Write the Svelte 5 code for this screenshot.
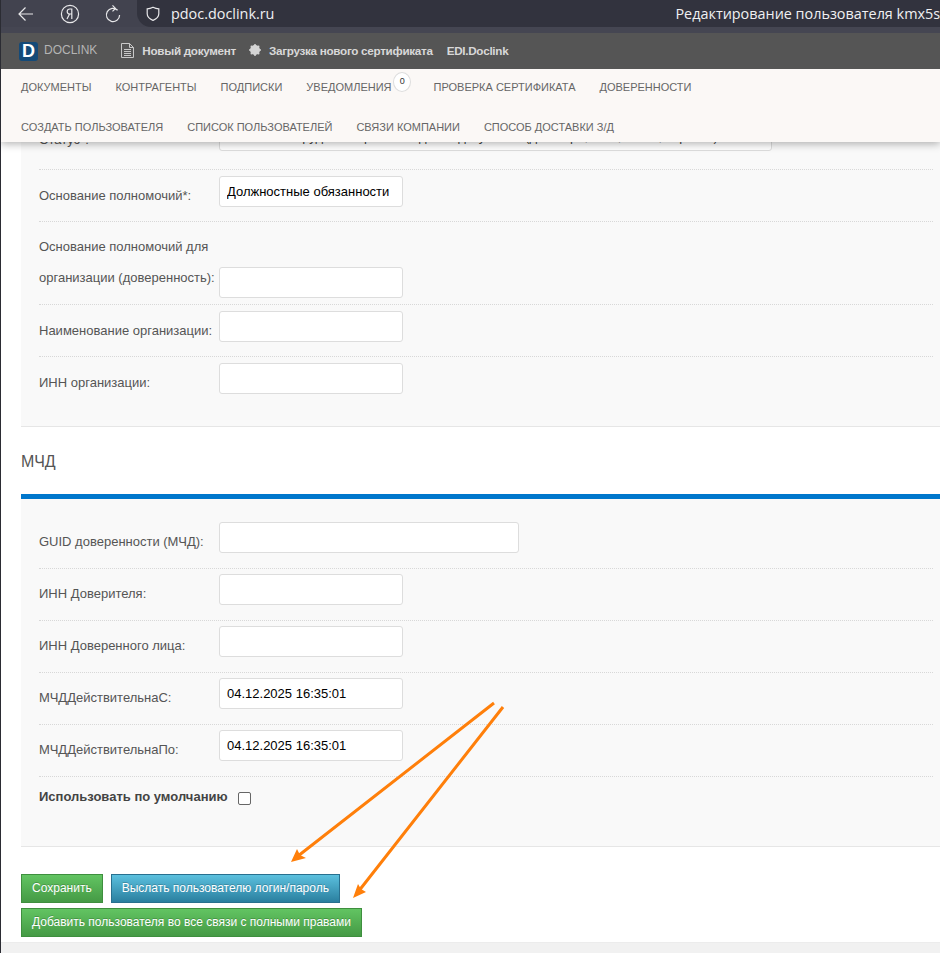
<script>
  const nav1 = ['ДОКУМЕНТЫ', 'КОНТРАГЕНТЫ', 'ПОДПИСКИ'];
  const nav1b = ['ПРОВЕРКА СЕРТИФИКАТА', 'ДОВЕРЕННОСТИ'];
  const nav2 = ['СОЗДАТЬ ПОЛЬЗОВАТЕЛЯ', 'СПИСОК ПОЛЬЗОВАТЕЛЕЙ', 'СВЯЗИ КОМПАНИИ', 'СПОСОБ ДОСТАВКИ З/Д'];
</script>

<div class="page">
  <header class="top">
    <div class="browser">
      <div class="tools">
        <svg class="ic back" width="18" height="16" viewBox="0 0 18 16" fill="none" stroke="#e8e8ea" stroke-width="1.2"><path d="M16 8H2M8.500 1.500 2 8l6.500 6.500"/></svg>
        <svg class="ic ya" width="20" height="20" viewBox="0 0 20 20" fill="none" stroke="#e8e8ea" stroke-width="1.2"><circle cx="10" cy="10" r="8.600"/><path d="M11.800 15V5H9.900C8.200 5 7.200 6 7.200 7.500S8.200 10 9.900 10h1.900M9.600 10 7 15"/></svg>
        <svg class="ic reload" width="18" height="20" viewBox="0 0 18 20" fill="none" stroke="#e8e8ea" stroke-width="1.2"><path d="M13.600 6.200A6.600 6.600 0 1 0 15.600 11M8.500 1.400l3 3-3 3"/></svg>
      </div>
      <div class="omni">
        <svg class="ic" width="14" height="16" viewBox="0 0 14 16" fill="none" stroke="#e8e8ea" stroke-width="1.2"><path d="M7 1.200c2 1 3.800 1.500 5.800 1.600v5c0 3-2.500 5.200-5.800 6.600C3.700 13 1.200 10.800 1.200 7.800v-5C3.200 2.700 5 2.200 7 1.200Z"/></svg>
        <span class="url">pdoc.doclink.ru</span>
        <span class="title">Редактирование пользователя kmx5si</span>
      </div>
    </div>
    <div class="band"></div>
    <div class="brandbar">
      <span class="logo">D</span>
      <span class="brand">DOCLINK</span>
      <span class="bitem doc">
        <svg width="13" height="15" viewBox="0 0 13 15" fill="none" stroke="#c8c8c8" stroke-width="1"><path d="M.5.5h8l4 4v10H.5ZM8.500.5v4h4M3 6.500h7M3 8.500h7M3 10.500h7M3 12.500h7"/></svg>
        Новый документ
      </span>
      <span class="bitem cert">
        <svg width="12" height="12" viewBox="0 0 12 12" fill="#d4d4d4"><circle cx="6" cy="6" r="5"/><circle cx="6" cy="1" r="1"/><circle cx="6" cy="11" r="1"/><circle cx="1" cy="6" r="1"/><circle cx="11" cy="6" r="1"/><circle cx="2.500" cy="2.500" r="1"/><circle cx="9.500" cy="2.500" r="1"/><circle cx="2.500" cy="9.500" r="1"/><circle cx="9.500" cy="9.500" r="1"/></svg>
        Загрузка нового сертификата
      </span>
      <span class="bitem edi">EDI.Doclink</span>
    </div>
    <nav class="menu">
      <div class="mrow">
        {#each nav1 as n}<span>{n}</span>{/each}
        <span class="notif">УВЕДОМЛЕНИЯ<b class="badge">0</b></span>
        {#each nav1b as n}<span>{n}</span>{/each}
      </div>
      <div class="mrow">
        {#each nav2 as n}<span>{n}</span>{/each}
      </div>
    </nav>
  </header>

  <main class="content">
    <section class="panel first">
      <div class="row status">
        <label>Статус*:</label>
        <div class="field wide">Сотрудник с правом подписи документа (договора, акта, счёта, справки)</div>
      </div>
      <div class="row">
        <label>Основание полномочий*:</label>
        <input value="Должностные обязанности" />
      </div>
      <div class="row tall">
        <label>Основание полномочий для организации (доверенность):</label>
        <input />
      </div>
      <div class="row">
        <label>Наименование организации:</label>
        <input />
      </div>
      <div class="row last">
        <label>ИНН организации:</label>
        <input />
      </div>
    </section>

    <h2>МЧД</h2>

    <section class="panel second">
      <div class="row">
        <label>GUID доверенности (МЧД):</label>
        <input class="guid" />
      </div>
      <div class="row">
        <label>ИНН Доверителя:</label>
        <input />
      </div>
      <div class="row">
        <label>ИНН Доверенного лица:</label>
        <input />
      </div>
      <div class="row">
        <label>МЧДДействительнаС:</label>
        <input value="04.12.2025 16:35:01" />
      </div>
      <div class="row">
        <label>МЧДДействительнаПо:</label>
        <input value="04.12.2025 16:35:01" />
      </div>
      <div class="check">
        <strong>Использовать по умолчанию</strong>
        <span class="box"></span>
      </div>
    </section>

    <div class="actions">
      <div class="btns">
        <button class="green">Сохранить</button>
        <button class="blue">Выслать пользователю логин/пароль</button>
      </div>
      <div class="btns">
        <button class="green">Добавить пользователя во все связи с полными правами</button>
      </div>
    </div>
  </main>

  <footer class="foot"></footer>

  <svg class="arrows" width="940" height="953" viewBox="0 0 940 953">
    <path d="M494 703 298 856M503 707 358 892" stroke="#ff7f0a" stroke-width="3" fill="none"/>
    <path d="M291 862 297 849 300 855 306 858Z M353 898 358 884 361 889 366 892Z" fill="#ff7f0a"/>
  </svg>
</div>

<style>
  :global(body) { margin: 0; background: #fff; }
  .page {
    position: relative;
    width: 940px;
    height: 953px;
    overflow: hidden;
    box-sizing: border-box;
    border-left: 1px solid #2b2c33;
    display: flex;
    flex-direction: column;
    font-family: "Liberation Sans", Arial, sans-serif;
    font-size: 13px;
    color: #555;
  }
  .top {
    position: relative;
    z-index: 2;
    flex: none;
    box-shadow: 0 2px 8px rgba(0, 0, 0, .3);
  }
  .browser {
    height: 27px;
    display: flex;
    background: #42434f;
  }
  .tools {
    width: 136px;
    flex: none;
    display: flex;
    align-items: center;
  }
  .ic { flex: none; }
  .back { margin-left: 16px; }
  .ya { margin-left: 25px; }
  .reload { margin-left: 24px; }
  .omni {
    flex: 1;
    min-width: 0;
    display: flex;
    align-items: center;
    background: #32333e;
    border-radius: 0 0 0 14px;
    padding-left: 9px;
    white-space: nowrap;
    color: #f0f0f2;
    font-family: "Open Sans", sans-serif;
    font-size: 14.4px;
    overflow: hidden;
  }
  .url { margin-left: 11px; }
  .title { margin-left: 401px; }
  .band { height: 6px; background: #454652; }
  .brandbar {
    height: 36px;
    background: #555;
    display: flex;
    align-items: center;
    padding-left: 18px;
    white-space: nowrap;
  }
  .logo {
    width: 19px;
    height: 19px;
    border-radius: 3px;
    background: #144a78;
    color: #fff;
    font-family: "Liberation Sans Narrow", "Liberation Sans", sans-serif;
    font-weight: 700;
    font-size: 18px;
    line-height: 19px;
    text-align: center;
  }
  .brand { margin-left: 6px; margin-bottom: 2px; color: #b4b4b4; font-size: 12px; }
  .bitem { display: flex; align-items: center; gap: 8px; margin-bottom: 2px; color: #d8d8d8; font-weight: 700; font-size: 11.7px; letter-spacing: -0.3px; }
  .doc { margin-left: 24px; }
  .cert { margin-left: 13px; }
  .edi { margin-left: 14px; }
  .menu {
    height: 73px;
    box-sizing: border-box;
    background: #fbf8f6;
    padding: 8px 0 0 20px;
    display: flex;
    flex-direction: column;
    gap: 20px;
  }
  .mrow {
    display: flex;
    gap: 24px;
    font-size: 11px;
    line-height: 20px;
    color: #666;
    white-space: nowrap;
  }
  .notif { position: relative; padding-right: 18px; }
  .badge {
    position: absolute;
    left: 87px;
    top: -5px;
    width: 16px;
    height: 18px;
    border-radius: 50%;
    background: #fff;
    border: 1px solid #ddd;
    color: #333;
    font-weight: 400;
    font-size: 9px;
    line-height: 16px;
    text-align: center;
  }
  .content { flex: 1; padding-left: 20px; min-height: 0; }
  .panel {
    background: #f9f9f9;
    border-bottom: 1px solid #e6e6e6;
    padding: 0 7px 0 18px;
  }
  .first { margin-top: -24px; height: 309px; box-sizing: border-box; }
  .row {
    display: flex;
    align-items: flex-end;
    padding: 6px 0 14px;
    border-bottom: 1px dotted #d8d8d8;
  }
  .second .row { padding: 5px 0 15px; }
  .row label {
    width: 180px;
    flex: none;
    line-height: 31px;
    box-sizing: border-box;
    margin-bottom: -4px;
    margin-top: 4px;
  }
  .row.status { padding: 2px 0 18px; }
  .row.tall { padding-bottom: 6px; }
  .row.tall label { margin-bottom: 5px; margin-top: 0; padding-top: 3px; }
  .row.last { border-bottom: 0; }
  input, .field {
    box-sizing: border-box;
    width: 184px;
    height: 31px;
    flex: none;
    background: #fff;
    border: 1px solid #ddd;
    border-radius: 3px;
    padding: 0 7px;
    font-family: "Liberation Sans", Arial, sans-serif;
    font-size: 13px;
    color: #000;
    outline: 0;
    margin: 0;
  }
  .field.wide {
    width: 553px;
    line-height: 29px;
    padding-top: 1px;
    padding-left: 60px;
    white-space: nowrap;
    overflow: hidden;
    color: #444;
  }
  input.guid { width: 300px; }
  h2 {
    margin: 0;
    height: 67px;
    box-sizing: border-box;
    padding-top: 26px;
    font-size: 16px;
    line-height: 18px;
    font-weight: 400;
    color: #555;
  }
  .second {
    border-top: 5px solid #0077cc;
    padding-top: 18px;
    height: 353px;
    box-sizing: border-box;
  }
  .check {
    display: flex;
    align-items: center;
    gap: 10px;
    padding-top: 12px;
    line-height: 16px;
  }
  .check strong { font-size: 13px; color: #444; }
  .box {
    width: 11px;
    height: 11px;
    border: 1px solid #666;
    border-radius: 2px;
    background: #fff;
    margin-top: 3px;
  }
  .actions {
    padding-top: 27px;
    display: flex;
    flex-direction: column;
    gap: 5px;
  }
  .btns { display: flex; gap: 8px; }
  button {
    height: 29px;
    box-sizing: border-box;
    border-radius: 0;
    padding: 0 10px 2px;
    color: #fff;
    font-family: "Liberation Sans", Arial, sans-serif;
    font-size: 12px;
    text-shadow: 0 -1px 0 rgba(0, 0, 0, .2);
  }
  .green {
    background: linear-gradient(#62c462, #459a45);
    border: 1px solid #3e8f3e;
  }
  .blue {
    background: linear-gradient(#5bc0de, #2a7f9f);
    border: 1px solid #28708f;
  }
  .foot { height: 11px; flex: none; background: #f1f1f1; border-top: 1px solid #ececec; box-sizing: border-box; }
  .arrows { position: absolute; left: -1px; top: 0; z-index: 3; pointer-events: none; }
</style>
